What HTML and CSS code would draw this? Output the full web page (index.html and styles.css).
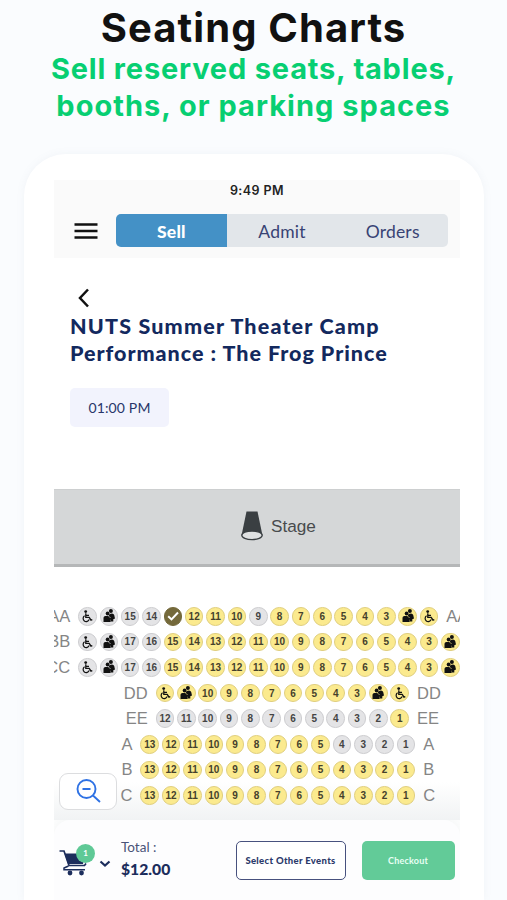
FILE: index.html
```html
<!DOCTYPE html>
<html lang="en">
<head>
<meta charset="utf-8">
<title>Seating Charts</title>
<link rel="stylesheet" href="styles.css">
</head>
<body>
<svg class="defs" width="0" height="0" aria-hidden="true">
  <symbol id="wheelchair" viewBox="0 0 18 18">
    <circle cx="7.7" cy="4.6" r="1.4" fill="#111"/>
    <path d="M7.8 6.2V10.3H11.2L13 13.2L14.3 12.7M8 8.3H11" fill="none" stroke="#111" stroke-width="1.3"/>
    <path d="M6.6 8.8A3.100 3.100 0 1 0 11.2 12.3" fill="none" stroke="#111" stroke-width="1.2"/>
  </symbol>
  <symbol id="companion" viewBox="0 0 18 18">
    <circle cx="10.9" cy="4" r="2" fill="#111"/>
    <circle cx="7.6" cy="6.5" r="1.9" fill="#111"/>
    <path d="M9.5 7Q13.400 5.400 14.200 8L15 11.400L13.300 12.200V14.600H10.600L11 11L8.800 9Z" fill="#111"/>
    <path d="M3.500 15V10.800Q3.600 9 5.400 8.900H8.200L10.300 11L12.200 10.200L12.800 11.600L10.600 12.800V15Z" fill="#111"/>
  </symbol>
  <symbol id="check" viewBox="0 0 18 18">
    <path d="M4.2 9.2L7.5 12.4L14 5.5" fill="none" stroke="#fff" stroke-width="2"/>
  </symbol>
</svg>
<header class="hero">
  <h1>Seating Charts</h1>
  <p><span class="l1">Sell reserved seats, tables,</span><br><span class="l2">booths, or parking spaces</span></p>
</header>
<main class="device">
  <div class="screen">
    <div class="top">
      <div class="clock">9:49 PM</div>
      <nav class="nav">
        <svg class="menu" width="24" height="18" viewBox="0 0 24 18"><path d="M.5 2.500H23.500M.5 9H23.500M.5 15.500H23.500" stroke="#111" stroke-width="2.500"/></svg>
        <div class="tabs"><span class="tab active">Sell</span><span class="tab">Admit</span><span class="tab">Orders</span></div>
      </nav>
    </div>
    <section class="event">
      <svg class="back" width="14" height="20" viewBox="0 0 14 20"><path d="M12 1.500L4 10L12 18.500" fill="none" stroke="#111" stroke-width="2.500"/></svg>
      <h2><span class="t1">NUTS Summer Theater Camp</span><br><span class="t2">Performance : The Frog Prince</span></h2>
      <span class="time">01:00 PM</span>
    </section>
    <div class="stage">
      <svg width="24" height="30" viewBox="0 0 24 30"><path d="M6.500 .5H17.500L22.500 24.500H1.500Z" fill="#3a3f42"/><ellipse cx="12" cy="24.300" rx="10.200" ry="4.300" fill="#dfe1e2" stroke="#3a3f42" stroke-width="1.300"/></svg>
      <span>Stage</span>
    </div>
    <section class="chart">
      <div id="rows"></div>
      <button class="zoom" aria-label="Zoom out"><svg width="26" height="26" viewBox="0 0 26 26"><g fill="none" stroke="#2f72e4" stroke-width="1.900"><circle cx="11.500" cy="10" r="9"/><path d="M7.500 10H15.500M18 16.500L25 23"/></g></svg></button>
    </section>
    <footer class="bar">
      <div class="cart">
        <svg width="36" height="36" viewBox="0 0 36 36"><path d="M.5 10H5L10 24.500H25.500L27 22.500" fill="none" stroke="#1c2d5c" stroke-width="1.700"/><path d="M5.500 12.500H26L24 23H9Z" fill="#1c2d5c"/><path d="M9.500 25L5 27V28.800H26" fill="none" stroke="#1c2d5c" stroke-width="1.500"/><circle cx="11" cy="32" r="2.400" fill="#1c2d5c"/><circle cx="22.500" cy="32" r="2.400" fill="#1c2d5c"/></svg>
        <span class="badge">1</span>
      </div>
      <svg class="chev" width="12" height="8" viewBox="0 0 12 8"><path d="M1.500 1.500L6 5.500L10.500 1.500" fill="none" stroke="#1c2d5c" stroke-width="2.200"/></svg>
      <div class="total"><span>Total :</span><strong>$12.00</strong></div>
      <button class="other">Select Other Events</button>
      <button class="checkout">Checkout</button>
    </footer>
  </div>
</main>
<script src="script.js"></script>
</body>
</html>
```
FILE: styles.css
```css
* { box-sizing: border-box; }
body { margin: 0; height: 900px; overflow: hidden; background: #fafcfe; font-family: Lato, sans-serif; display: flex; flex-direction: column; }
.defs { position: absolute; }
button { font-family: inherit; padding: 0; margin: 0; }
.hero { flex: none; height: 154px; padding-top: 5px; text-align: center; font-family: Inter, sans-serif; }
.hero h1 { margin: 0; font-size: 40px; line-height: 45px; font-weight: 700; letter-spacing: 1.1px; color: #111; white-space: nowrap; }
.hero p { margin: 0; font-size: 29px; line-height: 37px; font-weight: 700; color: #07cf72; white-space: nowrap; }
.l1 { letter-spacing: 0.82px; }
.l2 { letter-spacing: 1.02px; }
.device { flex: none; width: 460px; height: 746px; margin-left: 24px; padding: 26px 24px 0 30px; background: #fff; border-radius: 42px 42px 0 0; box-shadow: 0 0 8px rgba(110, 130, 150, 0.07); }
.screen { width: 406px; height: 720px; display: flex; flex-direction: column; overflow: hidden; }
.top { flex: none; height: 78px; background: #fafafa; }
.clock { text-align: center; font: 600 12.5px/22px Inter, sans-serif; letter-spacing: 0.45px; color: #222; }
.nav { display: flex; align-items: center; padding: 12px 12px 0 20px; }
.menu { flex: none; margin-right: 18px; }
.tabs { flex: 1; display: flex; height: 33px; border-radius: 5px; overflow: hidden; background: #e2e6ea; }
.tab { flex: 1; text-align: center; font-size: 17.500px; line-height: 35px; color: #384374; letter-spacing: 0.2px; }
.tab.active { background: #4491c6; color: #fff; font-weight: 900; }
.event { flex: none; height: 231px; padding: 30px 0 0 16px; }
.back { display: block; margin-left: 6px; }
.event h2 { margin: 5px 0 0; font-size: 21.5px; line-height: 27px; font-weight: 900; color: #13295e; white-space: nowrap; }
.t1 { letter-spacing: 1.17px; }
.t2 { letter-spacing: 0.97px; }
.time { display: block; width: 99px; height: 39px; margin-top: 21px; border-radius: 5px; background: #f2f3fd; font-size: 14px; line-height: 40px; letter-spacing: 0.15px; text-align: center; color: #29366a; }
.stage { flex: none; height: 78px; padding: 0 0 1px 186px; display: flex; align-items: center; gap: 7px; background: #d5d7d8; border-top: 1px solid #cdcfd0; border-bottom: 3px solid #b5b7b8; font: 17.200px "Liberation Sans", sans-serif; color: #484b4d; }
.stage svg { margin-top: -2px; }
.chart { flex: none; position: relative; height: 253px; padding-top: 36.500px; background: linear-gradient(#fff 215px, #f1f3f4 253px); }
.row { display: flex; align-items: center; width: max-content; height: 25.600px; }
.label { flex: none; display: flex; justify-content: flex-end; font: 16.500px "Liberation Sans", sans-serif; color: #858585; }
.label.left { margin-right: 6.600px; }
.label.right { margin-left: 6.600px; }
.seat { flex: none; display: flex; align-items: center; justify-content: center; width: 18.600px; height: 18.600px; margin: 0 1.380px; border: 1px solid #e0cf80; border-radius: 50%; background: #fbea8e; font: 700 10px "Liberation Sans", sans-serif; color: #45412b; }
.seat svg { flex: none; width: 18px; height: 18px; }
.seat.taken { border-color: #cdcdd0; background: #e4e4e6; color: #444; }
.seat.picked { border-color: #74693b; background: #74693b; }
.zoom { position: absolute; left: 5px; top: 206px; width: 58px; height: 37px; display: flex; align-items: center; justify-content: center; background: #fff; border: 1px solid #dcdddf; border-radius: 9px; }
.bar { flex: none; height: 80px; display: flex; align-items: flex-start; padding: 21px 5px 0 5px; background: #fdfdfe; border-radius: 16px 16px 0 0; box-shadow: 0 -4px 14px rgba(90, 110, 120, 0.07); }
.cart { position: relative; flex: none; width: 36px; height: 38px; }
.badge { position: absolute; left: 17px; top: 3px; width: 19px; height: 19px; border-radius: 50%; background: #5fc996; color: #fff; font-size: 8px; font-weight: 700; line-height: 19px; text-align: center; }
.chev { flex: none; margin: 19px 0 0 3.500px; }
.total { flex: none; width: 114.500px; margin-left: 10.500px; display: flex; flex-direction: column; color: #1c2d5c; white-space: nowrap; }
.total span { font-size: 13.500px; line-height: 12px; color: #4a5378; }
.total strong { margin-top: 6px; font-size: 15.700px; line-height: 20px; font-weight: 900; }
.other { flex: none; width: 110px; height: 39px; border: 1.500px solid #47517e; border-radius: 5px; background: #fff; font-size: 9.500px; letter-spacing: 0.32px; font-weight: 900; color: #2c3a6b; white-space: nowrap; }
.checkout { flex: none; width: 93px; height: 39px; margin-left: 16px; border: 0; border-radius: 5px; background: #62cb98; font-size: 9px; letter-spacing: 0.2px; font-weight: 700; color: #e8fff4; }
```
FILE: script.js
```js
// w = wheelchair, p = companion, * = selected, g prefix = unavailable
const rows = [
  ["AA", 16.2, "gw gp g15 g14 * 12 11 10 g9 8 7 6 5 4 3 p w"],
  ["BB", 16.2, "gw gp g17 g16 15 14 13 12 11 10 9 8 7 6 5 4 3 p"],
  ["CC", 16.2, "gw gp g17 g16 15 14 13 12 11 10 9 8 7 6 5 4 3 p"],
  ["DD", 93.7, "w p 10 9 8 7 6 5 4 3 p w"],
  ["EE", 93.7, "g12 g11 g10 g9 g8 g7 g6 g5 g4 g3 g2 1"],
  ["A", 78.5, "13 12 11 10 9 8 7 6 5 g4 g3 g2 g1"],
  ["B", 78.5, "13 12 11 10 9 8 7 6 5 4 3 2 1"],
  ["C", 78.5, "13 12 11 10 9 8 7 6 5 4 3 2 1"]
];
const icons = { w: "wheelchair", p: "companion", "*": "check" };

document.getElementById("rows").innerHTML = rows.map(([name, width, seats]) => {
  const cells = seats.split(" ").map((s) => {
    const taken = s[0] === "g";
    const key = taken ? s.slice(1) : s;
    const cls = "seat" + (taken ? " taken" : "") + (key === "*" ? " picked" : "");
    return `<span class="${cls}">${icons[key] ? `<svg><use href="#${icons[key]}"/></svg>` : key}</span>`;
  }).join("");
  return `<div class="row"><span class="label left" style="width:${width}px">${name}</span>${cells}<span class="label right">${name}</span></div>`;
}).join("");
```
